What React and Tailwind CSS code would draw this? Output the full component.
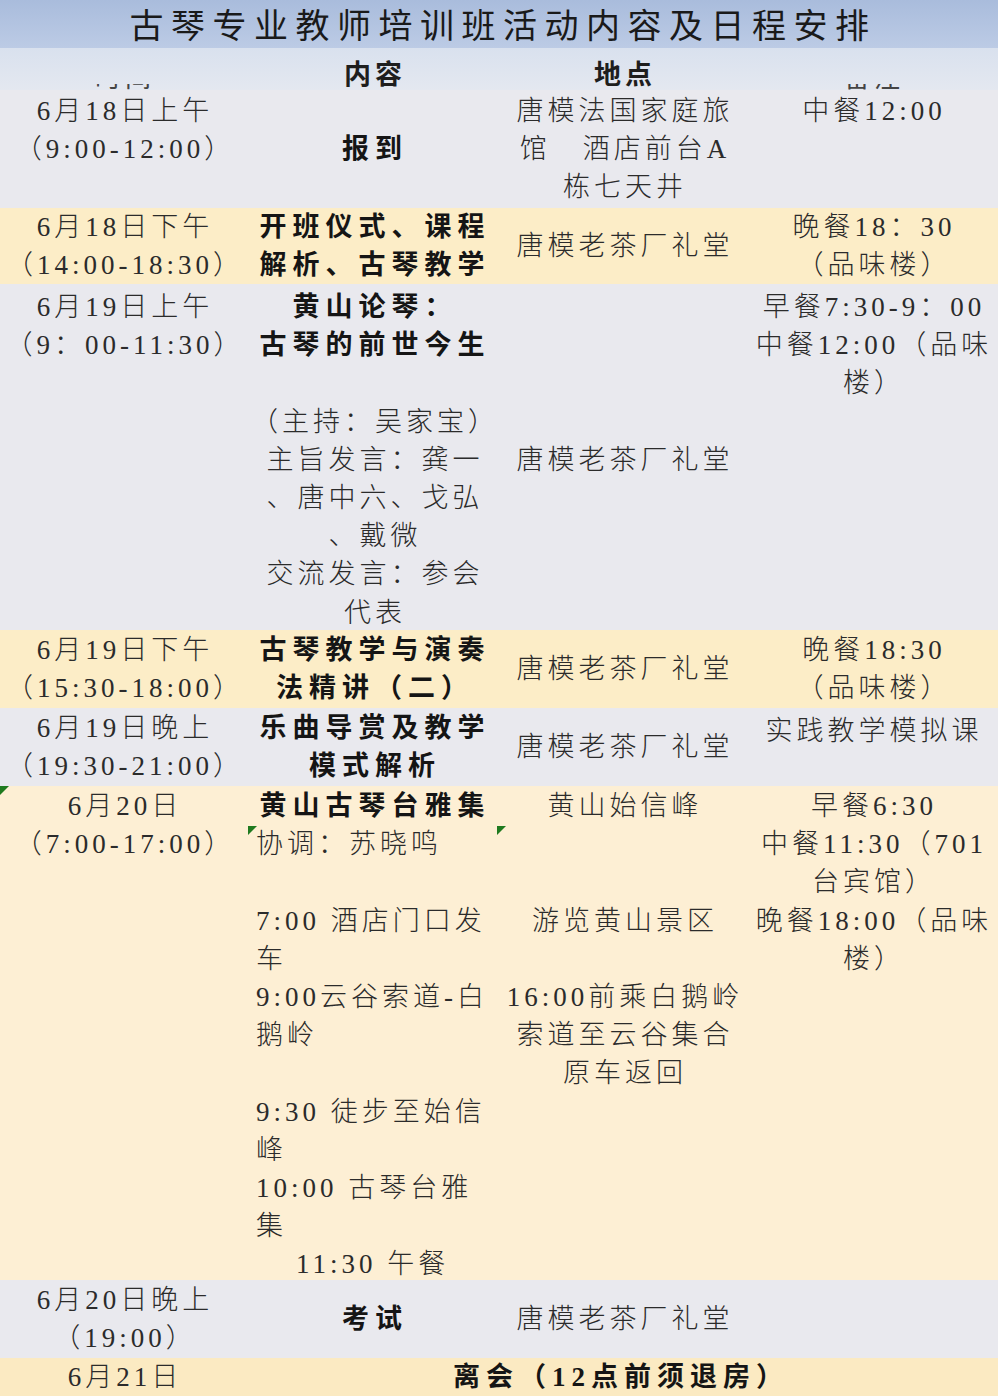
import React from "react";

const L = (t, cls = "text-center") => ({ t, cls });

function Cell({ lines, className = "", bold = false }) {
  return (
    <div className={"flex flex-col " + className}>
      {lines.map((ln, i) => (
        <div
          key={i}
          className={
            "h-[38.2px] leading-[38.2px] whitespace-nowrap " +
            ln.cls +
            (bold ? " font-bold tracking-[6px] text-[27px] text-[#151515]" : " font-light tracking-[4px] text-[27px]")
          }
        >
          {ln.t || "\u00a0"}
        </div>
      ))}
    </div>
  );
}

function Row({ h, bg, children, extra = null }) {
  return (
    <div className={"relative grid grid-cols-[250px_250px_250px_248px] " + h + " " + bg}>
      {children}
      {extra}
    </div>
  );
}

function Tri({ className }) {
  return <div className={"absolute w-[9px] h-[9px] bg-[#1f7a1f] [clip-path:polygon(0_0,100%_0,0_100%)] " + className} />;
}

export default function App() {
  return (
    <div className="w-[998px] h-[1396px] overflow-hidden bg-[#e9e9ee] text-[#2b2b2b] font-['Liberation_Serif','Noto_Sans_CJK_SC',serif]">
      {/* Title */}
      <div className="h-[48px] bg-gradient-to-b from-[#a9bcdc] to-[#bccbe5] flex items-center justify-center pt-[6px]">
        <div className="text-[34px] leading-[42px] tracking-[7.5px] text-[#1a1a1a] font-normal pl-[8px]">
          古琴专业教师培训班活动内容及日程安排
        </div>
      </div>
      {/* Header */}
      <div className="h-[42px] bg-gradient-to-b from-[#d9e1ee] to-[#e4e8f0] grid grid-cols-[250px_250px_250px_248px]">
        <div className="flex justify-center items-end overflow-hidden">
          <div className="h-[10px] overflow-hidden mb-[2px]">
            <div className="text-[26px] leading-[30px] mt-[-20px] tracking-[4px] text-[#444]">时间</div>
          </div>
        </div>
        <div className="flex justify-center items-center">
          <div className="text-[27px] tracking-[4px] font-bold text-[#1e1e1e] pt-[7px]">内容</div>
        </div>
        <div className="flex justify-center items-center">
          <div className="text-[27px] tracking-[4px] font-bold text-[#1e1e1e] pt-[7px]">地点</div>
        </div>
        <div className="flex justify-center items-end overflow-hidden">
          <div className="h-[10px] overflow-hidden mb-[2px]">
            <div className="text-[26px] leading-[30px] mt-[-20px] tracking-[4px] text-[#444]">备注</div>
          </div>
        </div>
      </div>

      {/* Row 1 */}
      <Row h="h-[118px]" bg="bg-[#e9e9ee]">
        <Cell className="pt-[2px]" lines={[L("6月18日上午"), L("（9:00-12:00）")]} />
        <Cell className="justify-center" bold lines={[L("报到")]} />
        <Cell className="pt-[2px]" lines={[L("唐模法国家庭旅"), L("馆\u00a0\u00a0 酒店前台A"), L("栋七天井")]} />
        <Cell className="pt-[2px]" lines={[L("中餐12:00")]} />
      </Row>

      {/* Row 2 */}
      <Row h="h-[76px]" bg="bg-[#fcedc7]">
        <Cell className="justify-center" lines={[L("6月18日下午"), L("（14:00-18:30）")]} />
        <Cell className="justify-center" bold lines={[L("开班仪式、课程"), L("解析、古琴教学")]} />
        <Cell className="justify-center" lines={[L("唐模老茶厂礼堂")]} />
        <Cell className="justify-center" lines={[L("晚餐18：30"), L("（品味楼）")]} />
      </Row>

      {/* Row 3 */}
      <Row h="h-[346px]" bg="bg-[#e9e9ee]">
        <Cell className="pt-[4px]" lines={[L("6月19日上午"), L("（9：00-11:30）")]} />
        <div className="flex flex-col pt-[4px]">
          <Cell bold lines={[L("黄山论琴："), L("古琴的前世今生")]} />
          <Cell
            lines={[
              L(""),
              L("（主持：吴家宝）"),
              L("主旨发言：龚一"),
              L("、唐中六、戈弘"),
              L("、戴微"),
              L("交流发言：参会"),
              L("代表"),
            ]}
          />
        </div>
        <Cell className="justify-center pt-[4px]" lines={[L("唐模老茶厂礼堂")]} />
        <Cell className="pt-[4px]" lines={[L("早餐7:30-9：00"), L("中餐12:00（品味"), L("楼）")]} />
      </Row>

      {/* Row 4 */}
      <Row h="h-[78px]" bg="bg-[#fcedc7]">
        <Cell className="justify-center" lines={[L("6月19日下午"), L("（15:30-18:00）")]} />
        <Cell className="justify-center" bold lines={[L("古琴教学与演奏"), L("法精讲（二）")]} />
        <Cell className="justify-center" lines={[L("唐模老茶厂礼堂")]} />
        <Cell className="justify-center" lines={[L("晚餐18:30"), L("（品味楼）")]} />
      </Row>

      {/* Row 5 */}
      <Row h="h-[78px]" bg="bg-[#e9e9ee]">
        <Cell className="justify-center" lines={[L("6月19日晚上"), L("（19:30-21:00）")]} />
        <Cell className="justify-center" bold lines={[L("乐曲导赏及教学"), L("模式解析")]} />
        <Cell className="justify-center" lines={[L("唐模老茶厂礼堂")]} />
        <Cell className="pt-[4px]" lines={[L("实践教学模拟课")]} />
      </Row>

      {/* Row 6 */}
      <Row
        h="h-[494px]"
        bg="bg-[#fdefd4]"
        extra={
          <>
            <Tri className="left-0 top-0" />
            <Tri className="left-[248px] top-[40px]" />
            <Tri className="left-[497px] top-[40px]" />
          </>
        }
      >
        <Cell className="pt-[1px]" lines={[L("6月20日"), L("（7:00-17:00）")]} />
        <div className="flex flex-col pt-[1px]">
          <Cell bold lines={[L("黄山古琴台雅集")]} />
          <Cell
            lines={[
              L("协调：苏晓鸣", "text-left pl-[6px]"),
              L(""),
              L("7:00 酒店门口发", "text-left pl-[6px]"),
              L("车", "text-left pl-[6px]"),
              L("9:00云谷索道-白", "text-left pl-[6px]"),
              L("鹅岭", "text-left pl-[6px]"),
              L(""),
              L("9:30 徒步至始信", "text-left pl-[6px]"),
              L("峰", "text-left pl-[6px]"),
              L("10:00 古琴台雅", "text-left pl-[6px]"),
              L("集", "text-left pl-[6px]"),
              L("11:30 午餐", "text-left pl-[46px]"),
            ]}
          />
        </div>
        <Cell
          className="pt-[1px]"
          lines={[
            L("黄山始信峰"),
            L(""),
            L(""),
            L("游览黄山景区"),
            L(""),
            L("16:00前乘白鹅岭"),
            L("索道至云谷集合"),
            L("原车返回"),
          ]}
        />
        <Cell
          className="pt-[1px]"
          lines={[L("早餐6:30"), L("中餐11:30（701"), L("台宾馆）"), L("晚餐18:00（品味"), L("楼）")]}
        />
      </Row>

      {/* Row 7 */}
      <Row h="h-[78px]" bg="bg-[#e9e9ee]">
        <Cell className="justify-center" lines={[L("6月20日晚上"), L("（19:00）")]} />
        <Cell className="justify-center" bold lines={[L("考试")]} />
        <Cell className="justify-center" lines={[L("唐模老茶厂礼堂")]} />
        <div />
      </Row>

      {/* Row 8 */}
      <div className="h-[38px] bg-[#fbeac2] grid grid-cols-[250px_748px]">
        <Cell className="justify-center" lines={[L("6月21日")]} />
        <div className="flex justify-center items-center pr-[6px]">
          <div className="h-[38px] leading-[38px] text-[27px] tracking-[6px] font-bold text-[#151515] whitespace-nowrap">
            离会（12点前须退房）
          </div>
        </div>
      </div>
    </div>
  );
}
